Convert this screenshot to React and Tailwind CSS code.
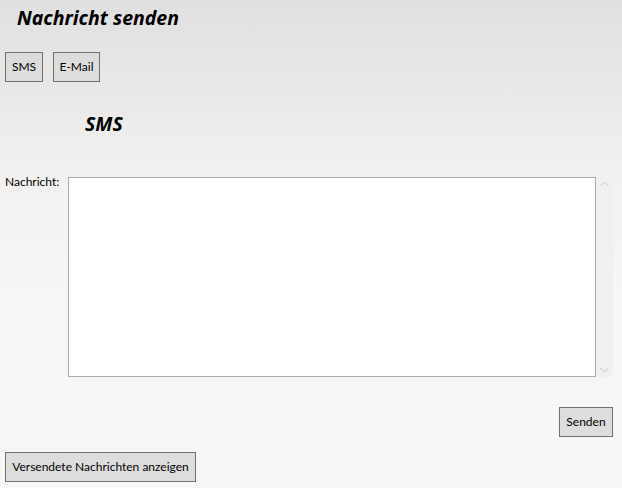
import React from "react";

const font = { fontFamily: 'Lato, "Noto Sans", sans-serif' };
const headFont = { fontFamily: '"Noto Sans", "Open Sans", sans-serif' };

function Btn({ children, className = "" }) {
  return (
    <button
      className={`h-[30px] border border-[#707070] bg-[#dddddd] text-[12px] text-black leading-none whitespace-nowrap px-0 ${className}`}
    >
      {children}
    </button>
  );
}

export default function App() {
  return (
    <div
      className="w-[622px] h-[488px] overflow-hidden bg-[linear-gradient(to_bottom,#e1e0e0_0%,#f2f1ef_35%,#f7f6f4_60%,#f8f7f5_100%)] text-black"
      style={font}
    >
      <div className="flex flex-col">
        <div
          className="h-[38px] pl-[17px] pt-[4px] text-[19.5px] font-bold italic leading-[28px] whitespace-nowrap"
          style={headFont}
        >
          Nachricht senden
        </div>
        <div className="flex gap-[10px] pl-[5px] mt-[14px]">
          <Btn className="w-[38px]">SMS</Btn>
          <Btn className="w-[47px]">E-Mail</Btn>
        </div>
        <div
          className="pl-[85px] mt-[28px] h-[30px] text-[19.5px] font-bold italic leading-[28px]"
          style={headFont}
        >
          SMS
        </div>
        <div className="flex mt-[37px] pl-[5px]">
          <div className="w-[63px] text-[12px] leading-[14px] -mt-[2px]">Nachricht:</div>
          <div className="w-[528px] h-[200px] bg-white border border-[#abadb3]"></div>
          <div className="w-[17px] h-[200px] bg-[#f0f0f0] flex flex-col justify-between items-center py-[4px]">
            <svg width="9" height="6" viewBox="0 0 9 6">
              <path d="M0.5 5 L4.5 1 L8.5 5" fill="none" stroke="#c2c2c2" strokeWidth="1" />
            </svg>
            <svg width="9" height="6" viewBox="0 0 9 6">
              <path d="M0.5 1 L4.5 5 L8.5 1" fill="none" stroke="#c2c2c2" strokeWidth="1" />
            </svg>
          </div>
        </div>
        <div className="flex justify-end pr-[9px] mt-[30px]">
          <Btn className="w-[54px]">Senden</Btn>
        </div>
        <div className="pl-[5px] mt-[15px]">
          <Btn className="w-[191px]">Versendete Nachrichten anzeigen</Btn>
        </div>
      </div>
    </div>
  );
}
